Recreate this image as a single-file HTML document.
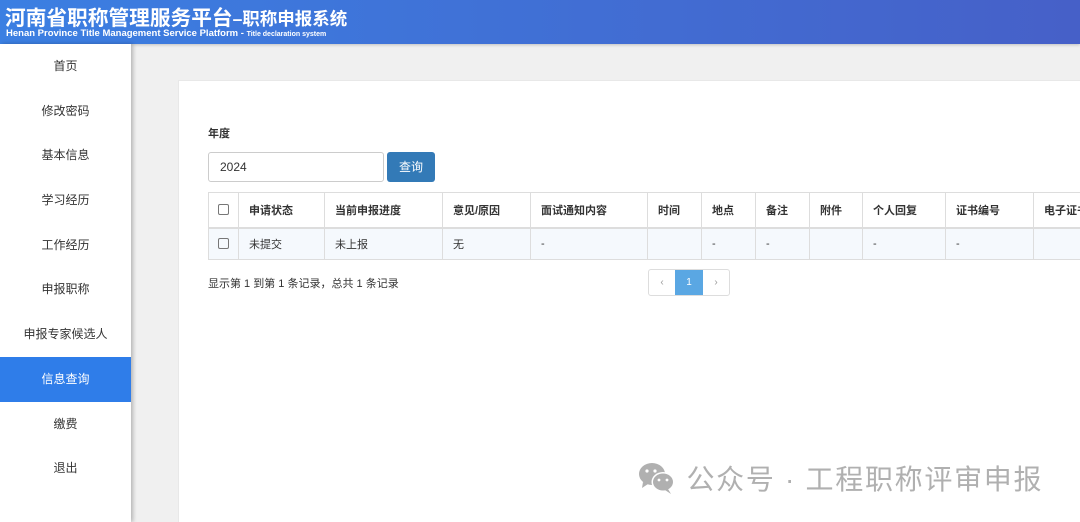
<!DOCTYPE html>
<html><head><meta charset="utf-8"><style>
*{margin:0;padding:0;box-sizing:border-box}
html{width:1080px;height:522px;overflow:hidden}
body{width:1080px;height:522px;overflow:hidden;background:#f0f0f0;font-family:"Liberation Sans","Noto Sans CJK SC",sans-serif;position:relative}
.hd{position:absolute;left:0;top:0;width:1080px;height:44px;background:linear-gradient(90deg,#3b7fe2,#4660c8);color:#fff;box-shadow:0 1px 3px rgba(0,0,0,.2)}
.hd .t{position:absolute;left:5px;top:1px;font-size:20.7px;font-weight:bold;white-space:nowrap}
.hd .t small{font-size:17.5px}
.hd .s{position:absolute;left:6px;top:28px;font-size:9.5px;font-weight:bold;white-space:nowrap}
.hd .s small{font-size:7px}
.sb{position:absolute;left:0;top:44px;width:131px;height:478px;background:#fff;box-shadow:2px 0 4px rgba(0,0,0,.25)}
.sb div{height:44.7px;line-height:44.7px;text-align:center;font-size:12px;color:#333}
.sb div.a{background:#2f7de9;color:#fff}
.card{position:absolute;left:178px;top:80px;width:902px;height:442px;background:#fff;border:1px solid #e8e8e8;border-right:0;border-bottom:0}
.lbl{position:absolute;left:208px;top:125px;font-size:11px;font-weight:bold;color:#333}
.inp{position:absolute;left:208px;top:152px;width:176px;height:30px;border:1px solid #ccc;border-radius:3px;font-size:12px;color:#333;padding:7px 11px}
.btn{position:absolute;left:387px;top:152px;width:48px;height:30px;background:#337ab7;border-radius:3px;color:#fff;font-size:12px;text-align:center;line-height:30px}
table{position:absolute;left:208px;top:192px;border-collapse:collapse;font-size:11px;color:#333;table-layout:fixed;width:900px;border:1px solid #ddd}
td{border-left:1px solid #ddd;padding:0 10px;white-space:nowrap;overflow:hidden}
tr.h td{height:35px;font-weight:bold;border-bottom:2px solid #ddd}
tr.r td{height:32px;background:#f5f9fd}
.cb{display:inline-block;width:11px;height:11px;border:1px solid #777;border-radius:2px;vertical-align:middle}
.info{position:absolute;left:208px;top:275px;font-size:11px;color:#333}
.pg{position:absolute;left:648px;top:269px;height:27px;display:flex;border:1px solid #ddd;border-radius:3px;font-size:10px}
.pg span{width:26px;text-align:center;line-height:25px;color:#999}
.pg span.c{background:#5aa7e3;color:#fff;width:28px}
.wm{position:absolute;left:637px;top:458px;font-size:28px;letter-spacing:1.7px;color:#b0b0b0;white-space:nowrap}
</style></head><body>
<div class="hd"><div class="t">河南省职称管理服务平台<small>–职称申报系统</small></div><div class="s">Henan Province Title Management Service Platform - <small>Title declaration system</small></div></div>
<div class="sb"><div>首页</div><div>修改密码</div><div>基本信息</div><div>学习经历</div><div>工作经历</div><div>申报职称</div><div>申报专家候选人</div><div class="a">信息查询</div><div>缴费</div><div>退出</div></div>
<div class="card"></div>
<div class="lbl">年度</div>
<div class="inp">2024</div>
<div class="btn">查询</div>
<table>
<colgroup><col style="width:30px"><col style="width:86px"><col style="width:118px"><col style="width:88px"><col style="width:117px"><col style="width:54px"><col style="width:54px"><col style="width:54px"><col style="width:53px"><col style="width:83px"><col style="width:88px"><col style="width:75px"></colgroup>
<tr class="h"><td style="border-left:0;padding:0 9px"><span class="cb"></span></td><td>申请状态</td><td>当前申报进度</td><td>意见/原因</td><td>面试通知内容</td><td>时间</td><td>地点</td><td>备注</td><td>附件</td><td>个人回复</td><td>证书编号</td><td>电子证书</td></tr>
<tr class="r"><td style="border-left:0;padding:0 9px"><span class="cb"></span></td><td>未提交</td><td>未上报</td><td>无</td><td>-</td><td></td><td>-</td><td>-</td><td></td><td>-</td><td>-</td><td></td></tr>
</table>
<div class="info">显示第 1 到第 1 条记录，总共 1 条记录</div>
<div class="pg"><span>‹</span><span class="c">1</span><span>›</span></div>
<div class="wm"><svg width="40" height="34" viewBox="0 0 40 34" style="vertical-align:-6px"><ellipse cx="15" cy="13" rx="13" ry="11" fill="#b0b0b0"/><path d="M6 21 L5 27 L11 23Z" fill="#b0b0b0"/><ellipse cx="26" cy="21" rx="11.5" ry="10" fill="#fff"/><ellipse cx="26" cy="21" rx="10" ry="8.5" fill="#b0b0b0"/><path d="M31 28 L34 33 L28 29Z" fill="#b0b0b0"/><circle cx="10" cy="10" r="1.6" fill="#fff"/><circle cx="18" cy="10" r="1.6" fill="#fff"/><circle cx="22" cy="19" r="1.4" fill="#fff"/><circle cx="30" cy="19" r="1.4" fill="#fff"/></svg> 公众号 · 工程职称评审申报</div>
</body></html>
